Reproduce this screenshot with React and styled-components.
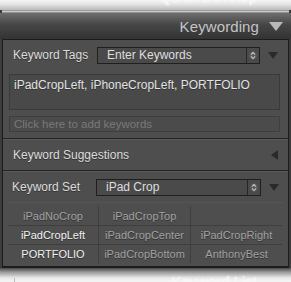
import React from 'react'
import styled, { createGlobalStyle } from 'styled-components'

const GlobalStyle = createGlobalStyle`
  html, body {
    margin: 0;
    padding: 0;
    background: #3a3a3a;
  }
  body {
    font-family: 'Liberation Sans', Arial, sans-serif;
  }
`

function UpDown() {
  return (
    <svg width="8" height="11" viewBox="0 0 8 11">
      <circle cx="4" cy="5.5" r="3.8" fill="#5c5c5c" />
      <path d="M2 4.6 L4 2.4 L6 4.6" fill="none" stroke="#bbb" strokeWidth="1.1" />
      <path d="M2 6.4 L4 8.6 L6 6.4" fill="none" stroke="#bbb" strokeWidth="1.1" />
    </svg>
  )
}

function Select({ value }) {
  return (
    <SelectBox>
      <SelectValue>{value}</SelectValue>
      <SelectArrows>
        <UpDown />
      </SelectArrows>
    </SelectBox>
  )
}

function App() {
  const grid = [
    { label: 'iPadNoCrop', on: false },
    { label: 'iPadCropTop', on: false },
    { label: '', on: false },
    { label: 'iPadCropLeft', on: true },
    { label: 'iPadCropCenter', on: false },
    { label: 'iPadCropRight', on: false },
    { label: 'PORTFOLIO', on: true },
    { label: 'iPadCropBottom', on: false },
    { label: 'AnthonyBest', on: false },
  ]

  return (
    <Page>
      <GlobalStyle />
      <TopFade>
        <FadedTitle>Quick Develop</FadedTitle>
      </TopFade>
      <Rule />
      <Header>
        <HeaderTitle>Keywording</HeaderTitle>
        <Triangle dir="down" size={7} color="#b8b8b8" />
      </Header>
      <Panel>
        <Section>
          <Row>
            <Label>Keyword Tags</Label>
            <Select value="Enter Keywords" />
            <Triangle dir="down" size={5} color="#2a2a2a" />
          </Row>
          <TagsArea>iPadCropLeft, iPhoneCropLeft, PORTFOLIO</TagsArea>
          <AddInput>Click here to add keywords</AddInput>
        </Section>
        <Divider />
        <SuggestRow>
          <Label>Keyword Suggestions</Label>
          <Triangle dir="left" size={5} color="#2a2a2a" />
        </SuggestRow>
        <Divider />
        <SetSection>
          <Row>
            <Label>Keyword Set</Label>
            <Select value="iPad Crop" />
            <Triangle dir="down" size={5} color="#2a2a2a" />
          </Row>
          <KeyGrid>
            {grid.map((k, i) => (
              <KeyCell key={i} on={k.on} first={i % 3 === 0} top={i < 3}>
                {k.label}
              </KeyCell>
            ))}
          </KeyGrid>
        </SetSection>
      </Panel>
      <BottomFade>
        <Tick />
        <FadedTitle bottom>Keyword List</FadedTitle>
      </BottomFade>
    </Page>
  )
}

export default App

const Page = styled.div`
  width: 291px;
  height: 282px;
  overflow: hidden;
  display: flex;
  flex-direction: column;
  background: #3c3c3c;
`
const TopFade = styled.div`
  height: 10px;
  flex-shrink: 0;
  overflow: hidden;
  display: flex;
  justify-content: flex-end;
  align-items: flex-end;
  padding-right: 34px;
  background: linear-gradient(to bottom, #f4f4f4 0%, #e6e6e6 40%, #b9b9b9 100%);
`
const FadedTitle = styled.div`
  font-size: 15px;
  line-height: 15px;
  color: #f8f8f8;
  text-shadow: 0 0 2px #fff;
  margin-bottom: ${(p) => (p.bottom ? '-7px' : '6px')};
  opacity: 0.9;
`
const Rule = styled.div`
  height: 3px;
  flex-shrink: 0;
  margin: 0 2px;
  background: linear-gradient(to bottom, #8a8a8a, #c8c8c8 50%, #7a7a7a);
`
const Header = styled.div`
  height: 26px;
  flex-shrink: 0;
  display: flex;
  align-items: center;
  justify-content: flex-end;
  gap: 10px;
  padding: 0 8px 0 0;
  background: linear-gradient(to bottom, #6e6e6e 0%, #464646 45%, #333 100%);
`
const HeaderTitle = styled.span`
  font-size: 15px;
  color: #c4c4c4;
  letter-spacing: 0.1px;
`
const Triangle = styled.span`
  width: 0;
  height: 0;
  flex-shrink: 0;
  border-style: solid;
  border-color: transparent;
  ${(p) =>
    p.dir === 'down'
      ? `border-width: ${p.size * 1.4}px ${p.size}px 0 ${p.size}px; border-top-color: ${p.color};`
      : `border-width: ${p.size}px ${p.size * 1.4}px ${p.size}px 0; border-right-color: ${p.color};`}
`
const Panel = styled.div`
  margin: 0 2px;
  flex-shrink: 0;
  border: 1px solid #1c1c1c;
  border-bottom-width: 2px;
  background: #4e4e4e;
  display: flex;
  flex-direction: column;
`
const Section = styled.div`
  display: flex;
  flex-direction: column;
  padding: 0 8px 6px 6px;
`
const SetSection = styled.div`
  display: flex;
  flex-direction: column;
  padding: 0 5px 3px 5px;
`
const Row = styled.div`
  height: 30px;
  display: flex;
  align-items: center;
  padding-left: 4px;
  padding-right: 2px;
`
const SuggestRow = styled(Row)`
  justify-content: space-between;
  padding: 0 10px 0 10px;
`
const Label = styled.span`
  width: 84px;
  flex-shrink: 0;
  font-size: 12px;
  color: #dcdcdc;
  white-space: nowrap;
  text-shadow: 0 1px 0 #333;
`
const SelectBox = styled.div`
  width: 165px;
  height: 17px;
  box-sizing: border-box;
  border: 1px solid #1f1f1f;
  background: #4a4a4a;
  display: flex;
  margin-right: 8px;
`
const SelectValue = styled.span`
  flex: 1;
  font-size: 12px;
  line-height: 15px;
  padding-left: 9px;
  color: #dedede;
`
const SelectArrows = styled.span`
  width: 12px;
  border-left: 1px solid #262626;
  display: flex;
  align-items: center;
  justify-content: center;
`
const TagsArea = styled.div`
  height: 36px;
  box-sizing: border-box;
  margin-top: 4px;
  border: 1px solid #3a3a3a;
  background: #494949;
  padding: 3px 4px;
  font-size: 12px;
  color: #e2e2e2;
  text-shadow: 0 1px 0 #333;
`
const AddInput = styled.div`
  height: 16px;
  box-sizing: border-box;
  margin-top: 6px;
  border: 1px solid #3e3e3e;
  background: #4b4b4b;
  padding-left: 4px;
  font-size: 11.5px;
  line-height: 14px;
  color: #7a7a7a;
`
const Divider = styled.div`
  height: 1px;
  background: #232323;
  border-bottom: 1px solid #5a5a5a;
`
const KeyGrid = styled.div`
  display: grid;
  grid-template-columns: 90px 92px 92px;
  grid-auto-rows: 19px;
  border-top: 1px solid #555;
  padding-top: 3px;
`
const KeyCell = styled.div`
  display: flex;
  align-items: center;
  justify-content: center;
  font-size: 11px;
  color: ${(p) => (p.on ? '#f2f2f2' : '#a2a2a2')};
  text-shadow: 0 1px 0 #333;
  border-left: ${(p) => (p.first ? 'none' : '1px solid #3e3e3e')};
  border-top: ${(p) => (p.top ? 'none' : '1px solid #3e3e3e')};
`
const BottomFade = styled.div`
  flex: 1;
  display: flex;
  justify-content: space-between;
  align-items: flex-end;
  padding: 0 34px 0 14px;
  overflow: hidden;
  background: linear-gradient(to bottom, #4a4a4a 0%, #9a9a9a 30%, #e8e8e8 70%, #f6f6f6 100%);
`
const Tick = styled.span`
  width: 1px;
  height: 4px;
  background: #bbb;
`
